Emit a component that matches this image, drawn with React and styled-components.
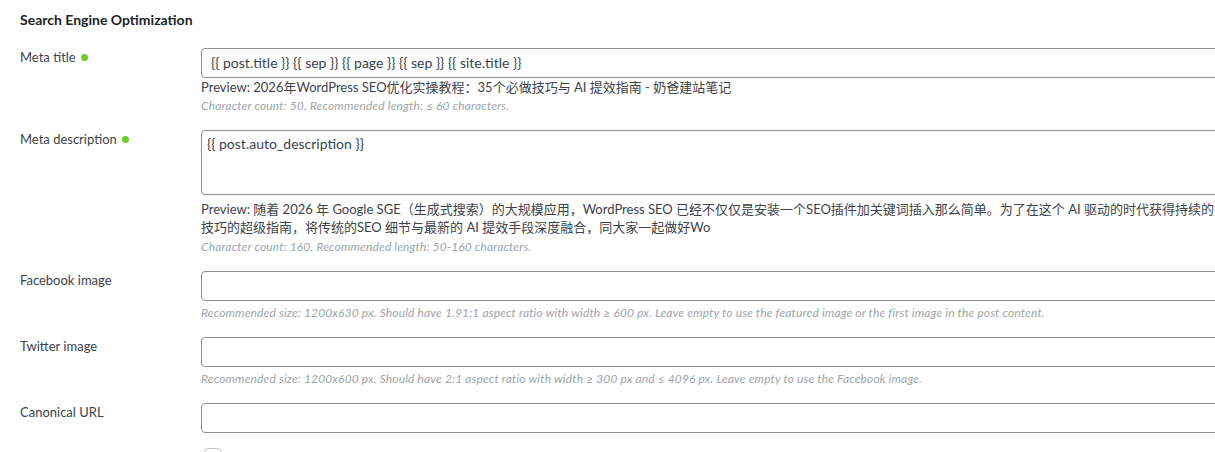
import React from "react";
import styled, { createGlobalStyle } from "styled-components";

const Global = createGlobalStyle`
  html, body { margin: 0; padding: 0; background: #fff; overflow: hidden; }
  body { font-family: "Lato", "Noto Sans CJK SC", sans-serif; color: #3c434a; }
`;

const Page = styled.div`
  width: 1400px;
  padding: 11px 20px 0 20px;
  box-sizing: border-box;
`;

const Heading = styled.h2`
  margin: 0 0 19px 0;
  font-size: 14px;
  line-height: 18px;
  font-weight: 700;
  color: #1d2327;
`;

const Form = styled.div`
  display: flex;
  flex-direction: column;
  gap: 15px;
`;

const Row = styled.div`
  display: grid;
  grid-template-columns: 181px 1fr;
  align-items: start;
`;

const Label = styled.div`
  display: flex;
  align-items: center;
  gap: 5px;
  font-size: 13px;
  line-height: 18px;
  color: #3c434a;
`;

const Dot = styled.span`
  width: 7px;
  height: 7px;
  border-radius: 50%;
  background: #6fcd2a;
  margin-top: 1px;
`;

const Field = styled.div`
  display: flex;
  flex-direction: column;
`;

const Input = styled.div`
  box-sizing: border-box;
  width: 1100px;
  height: 30px;
  border: 1px solid #8c8f94;
  border-radius: 4px;
  padding: 0 9px;
  font-size: 14px;
  line-height: 28px;
  color: #3c434a;
  white-space: nowrap;
`;

const TextArea = styled.div`
  box-sizing: border-box;
  width: 1100px;
  height: 65px;
  border: 1px solid #8c8f94;
  border-radius: 4px;
  padding: 3px 5px;
  font-size: 14px;
  line-height: 20px;
  color: #3c434a;
`;

const Preview = styled.div`
  margin-top: ${(p) => p.$mt || 0}px;
  font-size: 13px;
  line-height: 18px;
  color: #3c434a;
  white-space: nowrap;
`;

const Help = styled.div`
  margin-top: ${(p) => p.$mt || 0}px;
  font-size: 12px;
  line-height: 18px;
  letter-spacing: 0.15px;
  font-style: italic;
  color: #a0a5aa;
  white-space: nowrap;
`;

const Check = styled.span`
  display: block;
  margin-left: 3px;
  width: 18px;
  height: 18px;
  box-sizing: border-box;
  border: 1px solid #c3c4c7;
  border-radius: 4px;
`;

export default function App() {
  return (
    <>
      <Global />
      <Page>
        <Heading>Search Engine Optimization</Heading>
        <Form>
          <Row>
            <Label>
              Meta title <Dot />
            </Label>
            <Field>
              <Input>{"{{ post.title }} {{ sep }} {{ page }} {{ sep }} {{ site.title }}"}</Input>
              <Preview>
                Preview: 2026年WordPress SEO优化实操教程：35个必做技巧与 AI 提效指南 - 奶爸建站笔记
              </Preview>
              <Help $mt={1}>Character count: 50. Recommended length: ≤ 60 characters.</Help>
            </Field>
          </Row>
          <Row>
            <Label>
              Meta description <Dot />
            </Label>
            <Field>
              <TextArea>{"{{ post.auto_description }}"}</TextArea>
              <Preview $mt={5}>
                Preview: 随着 2026 年 Google SGE（生成式搜索）的大规模应用，WordPress SEO 已经不仅仅是安装一个SEO插件加关键词插入那么简单。为了在这个 AI 驱动的时代获得持续的免费流量，我整理了这份
                <br />
                技巧的超级指南，将传统的SEO 细节与最新的 AI 提效手段深度融合，同大家一起做好Wo
              </Preview>
              <Help $mt={2}>Character count: 160. Recommended length: 50-160 characters.</Help>
            </Field>
          </Row>
          <Row>
            <Label>Facebook image</Label>
            <Field>
              <Input />
              <Help $mt={3}>
                Recommended size: 1200x630 px. Should have 1.91:1 aspect ratio with width ≥ 600 px. Leave empty to use the featured image or the first image in the post content.
              </Help>
            </Field>
          </Row>
          <Row>
            <Label>Twitter image</Label>
            <Field>
              <Input />
              <Help $mt={3}>
                Recommended size: 1200x600 px. Should have 2:1 aspect ratio with width ≥ 300 px and ≤ 4096 px. Leave empty to use the Facebook image.
              </Help>
            </Field>
          </Row>
          <Row>
            <Label>Canonical URL</Label>
            <Field>
              <Input />
            </Field>
          </Row>
          <Row>
            <Label />
            <Field>
              <Check />
            </Field>
          </Row>
        </Form>
      </Page>
    </>
  );
}
